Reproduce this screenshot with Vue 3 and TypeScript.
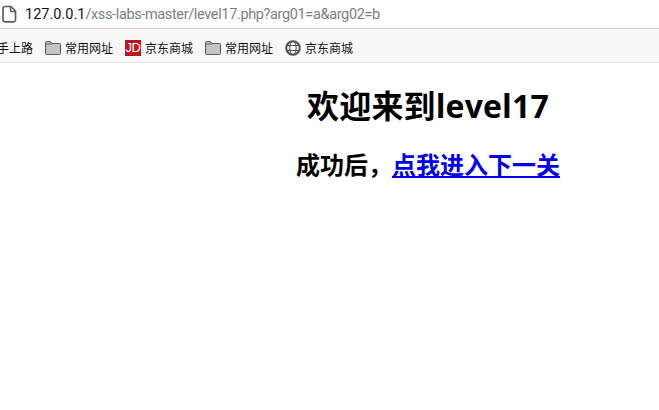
<script setup lang="ts">
const bookmarks = [
  { icon: 'folder', label: '常用网址' },
  { icon: 'jd', label: '京东商城' },
  { icon: 'folder', label: '常用网址' },
  { icon: 'globe', label: '京东商城' },
]
</script>

<template>
  <div class="window">
    <div class="urlbar">
      <svg class="page-icon" width="16" height="18" viewBox="0 0 16 18" fill="none">
        <path d="M3.800 1.500h6.200L14.500 6v9a1.800 1.800 0 0 1-1.800 1.800H3.800A1.800 1.800 0 0 1 2 15V3.300A1.800 1.800 0 0 1 3.800 1.500Z" stroke="#5a5e63" stroke-width="1.700" />
        <path d="M9.600 1.700V6.400h4.700" stroke="#5a5e63" stroke-width="1.500" />
      </svg>
      <span class="url"><span class="host">127.0.0.1</span>/xss-labs-master/level17.php?arg01=a&amp;arg02=b</span>
    </div>
    <div class="bookmarks">
      <span class="bookmark first">手上路</span>
      <span v-for="(b, i) in bookmarks" :key="i" class="bookmark">
        <svg v-if="b.icon === 'folder'" width="16" height="16" viewBox="0 0 16 16">
          <path d="M.5 2.500A1 1 0 0 1 1.500 1.500h4l1.500 2h7.500a1 1 0 0 1 1 1v9a1 1 0 0 1-1 1h-13a1 1 0 0 1-1-1Z" fill="#c4c4c4" stroke="#5a5a5a" />
          <path d="M1 4h5.800" stroke="#5a5a5a" />
        </svg>
        <span v-else-if="b.icon === 'jd'" class="jd">JD</span>
        <svg v-else width="16" height="16" viewBox="0 0 16 16" fill="none" stroke="#505050">
          <circle cx="8" cy="8" r="6.800" stroke-width="2" />
          <ellipse cx="8" cy="8" rx="3.200" ry="6.700" />
          <path d="M1.500 5.500h13M1.500 10.500h13" />
        </svg>
        <span>{{ b.label }}</span>
      </span>
    </div>
    <main class="page">
      <h1>欢迎来到level17</h1>
      <h2>成功后，<a href="#">点我进入下一关</a></h2>
    </main>
  </div>
</template>

<style>
html, body { margin: 0; background: #fff; overflow: hidden; }
</style>

<style scoped>
.window {
  width: 659px;
  height: 410px;
  overflow: hidden;
  background: #fff;
  font-family: "Noto Sans CJK SC", "Noto Sans", sans-serif;
}
.urlbar {
  height: 28px;
  display: flex;
  align-items: center;
  padding-left: 1px;
  gap: 8px;
  border-bottom: 1px solid #cfcfcf;
}
.page-icon { flex: none; }
.url {
  font-family: Roboto, "Noto Sans", sans-serif;
  font-size: 14.5px;
  letter-spacing: -0.36px;
  color: #7a7f85;
  white-space: nowrap;
}
.host { color: #111; letter-spacing: 0; }
.bookmarks {
  height: 34px;
  box-sizing: border-box;
  padding-top: 4px;
  display: flex;
  align-items: center;
  gap: 12px;
  margin-left: -3px;
  background: #f8f8f8;
  border-bottom: 1px solid #e2e2e2;
  font-size: 12px;
  color: #111;
}
.bookmark {
  display: flex;
  align-items: center;
  gap: 4px;
  flex: none;
}
.jd {
  width: 16px;
  height: 16px;
  background: #c4121f;
  color: #fff;
  font: 400 13px/16px "Liberation Sans", sans-serif;
  text-align: center;
  letter-spacing: -0.5px;
}
.page {
  width: 856px;
  text-align: center;
  color: #000;
  font-family: "Open Sans", "Noto Sans CJK SC", sans-serif;
  overflow: hidden;
}
h1 {
  font-size: 32px;
  font-weight: 700;
  margin: 20px 0 0;
  line-height: 46px;
  letter-spacing: 0.15px;
}
h2 {
  font-size: 24px;
  font-weight: 700;
  margin: 19px 0 0;
  line-height: 34px;
}
a { color: #0000ee; text-decoration: underline; }
</style>
